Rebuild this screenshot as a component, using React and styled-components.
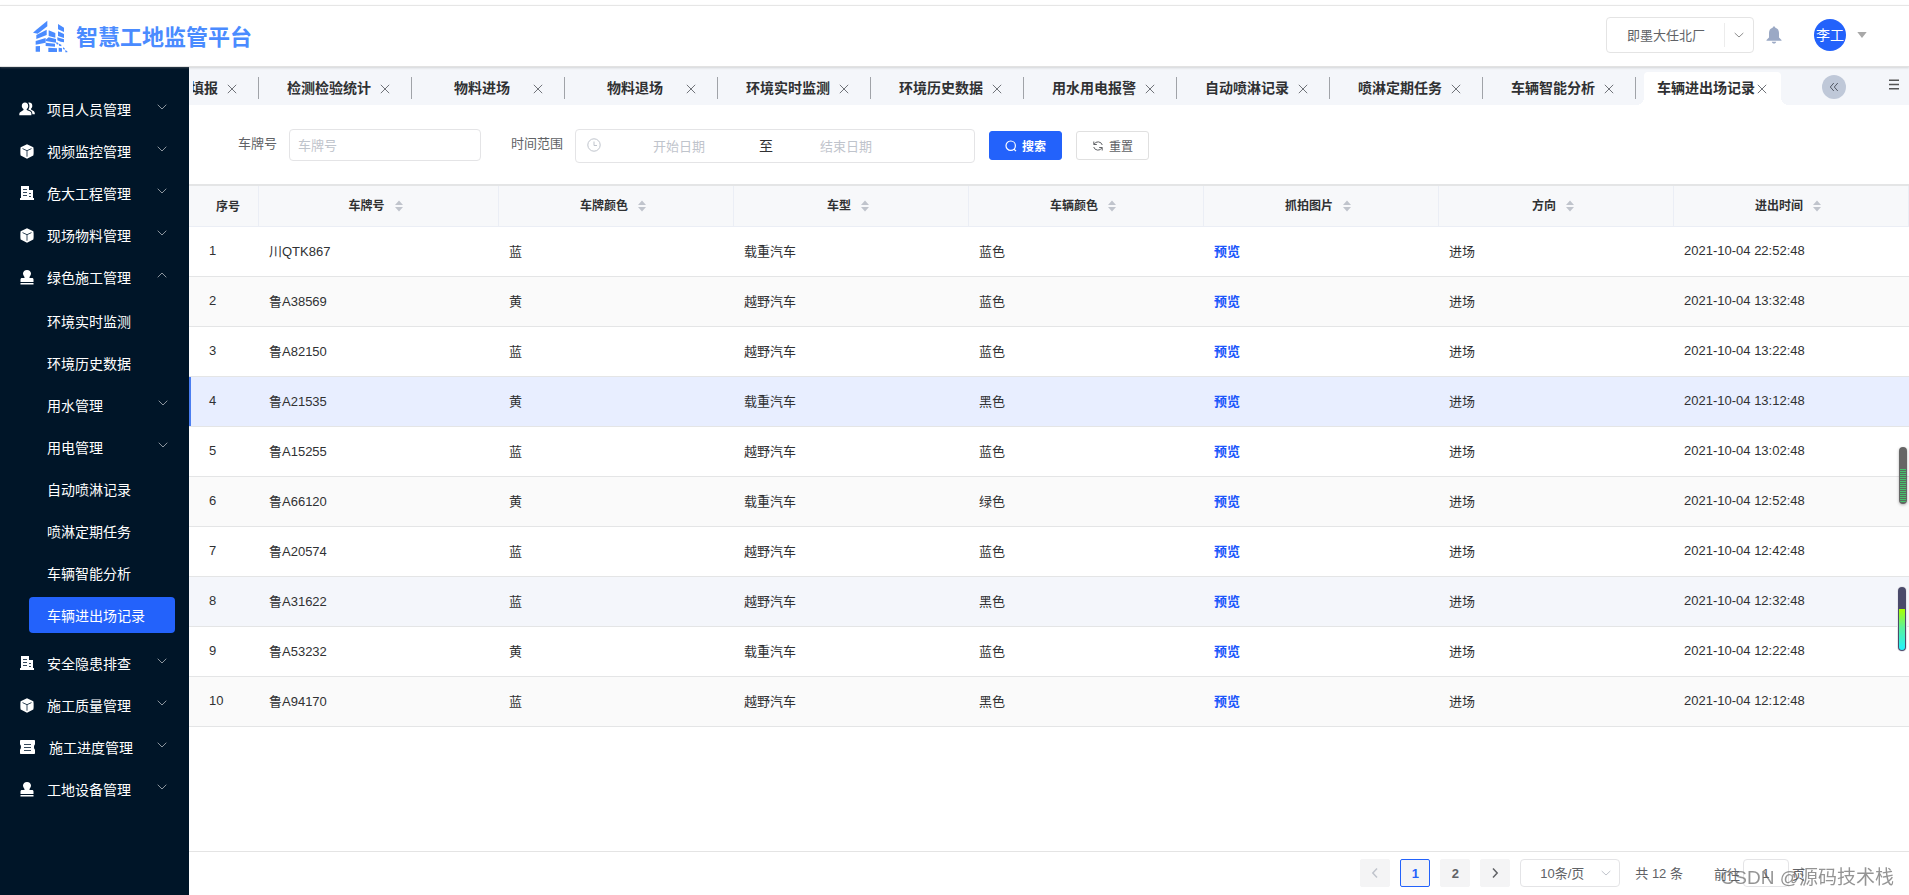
import React, { useState } from 'react'
import styled, { createGlobalStyle, css } from 'styled-components'

const GlobalStyle = createGlobalStyle`
* {
  box-sizing: border-box;
}

body {
  margin: 0;
  background: #fff;
  color: #303133;
  font-size: 13px;
  font-family: "Liberation Sans", "Noto Sans CJK SC", sans-serif;
}

button, input, select {
  font-family: inherit;
  outline: none;
}

button {
  padding: 0;
  border: none;
  background: none;
  cursor: pointer;
}

svg {
  display: block;
  flex: none;
}
`

const Page = styled.div`
display: flex;
flex-direction: column;
min-height: 100vh;
overflow: hidden;
padding-top: 5px;
`

/* ---------- header ---------- */

const Header = styled.header`
position: relative;
z-index: 2;
display: flex;
align-items: center;
justify-content: space-between;
height: 62px;
padding: 0 42px 0 33px;
border-top: 1px solid #e6e6e6;
border-bottom: 1px solid #e2e2e2;
box-shadow: 0 1px 2px rgba(150, 150, 150, 0.35);
`

const Brand = styled.a`
display: flex;
align-items: center;
gap: 8px;
color: #4a8bff;
text-decoration: none;
`

const BrandName = styled.h1`
margin: 0;
padding-top: 4px;
font-size: 22px;
line-height: 32px;
font-weight: 700;
`

const HeaderRight = styled.div`
display: flex;
align-items: center;
padding-bottom: 2px;
`

const SiteSelect = styled.label`
display: flex;
align-items: center;
width: 148px;
height: 36px;
margin-right: 12px;
border: 1px solid #e4e4e4;
border-radius: 4px;
color: #8c8c8c;
`

const SiteInput = styled.select`
appearance: none;
width: 118px;
height: 24px;
margin-right: 9px;
padding: 0 0 0 20px;
border: none;
border-right: 1px solid #ececec;
background: none;
color: #606266;
font-size: 13px;
`

const BellButton = styled.button`
margin-right: 32px;
color: #9ba9c5;
`

const UserButton = styled.button`
display: flex;
align-items: center;
gap: 11px;
color: #a8a8a8;
`

const Avatar = styled.span`
width: 32px;
border-radius: 50%;
background: #2362fb;
color: #fff;
font-size: 14px;
line-height: 32px;
text-align: center;
`

/* ---------- sidebar ---------- */

const Body = styled.div`
display: flex;
flex: 1;
`

const Sidebar = styled.nav`
flex: none;
width: 189px;
padding-top: 21px;
background: #001528;
`

const MenuItem = styled.button`
display: flex;
align-items: center;
width: 100%;
height: 42px;
padding: 0 22px 0 19px;
color: #fff;
font-size: 14px;
`

const MenuText = styled.span`
flex: 1;
padding-left: ${props => props.$wide ? '13px' : '12px'};
text-align: left;
`

const SubMenu = styled.div`
padding: 2px 0 6px;
`

const SubItem = styled(MenuItem)`
padding: 0 21px 0 35px;
`

const ActiveItem = styled.button`
display: flex;
align-items: center;
width: 146px;
height: 36px;
margin: 3px 0 3px 29px;
padding-left: 18px;
border-radius: 4px;
background: #2362fb;
color: #fff;
font-size: 14px;
`

const Arrow = styled.svg`
color: #8c959e;
margin-bottom: 4px;
transform: ${props => props.$open ? 'rotate(180deg)' : 'none'};
`

/* ---------- tabs ---------- */

const Main = styled.main`
display: flex;
flex: 1;
flex-direction: column;
min-width: 0;
`

const TabBar = styled.div`
display: flex;
align-items: center;
justify-content: space-between;
height: 38px;
padding: 0 10px 0 4px;
background: #f4f6fa;
`

const TabStrip = styled.div`
display: flex;
align-self: flex-end;
height: 33px;
`

const Tab = styled.div`
position: relative;
display: flex;
align-items: center;
width: ${props => props.$cut ? '66px' : '153px'};
padding-left: ${props => props.$cut ? '0' : '21px'};

&::after {
  content: '';
  position: absolute;
  right: 0;
  top: 5px;
  width: 1px;
  height: 22px;
  background: #a0a3a8;
}

${props => props.$active && css`
  width: 137px;
  margin: 0 8px;
  padding-left: 13px;
  border-radius: 4px 4px 0 0;
  background: #fff;

  &::before, &::after {
    content: '';
    position: absolute;
    top: auto;
    bottom: 0;
    width: 8px;
    height: 8px;
  }
  &::before {
    left: -8px;
    background: radial-gradient(circle at 0 0, transparent 8px, #fff 8px);
  }
  &::after {
    right: -8px;
    background: radial-gradient(circle at 100% 0, transparent 8px, #fff 8px);
  }
`}
`

const TabLink = styled.a`
display: flex;
justify-content: ${props => props.$cut ? 'flex-end' : 'center'};
width: ${props => props.$cut ? '25px' : '98px'};
margin-right: ${props => props.$cut ? '7px' : '0'};
padding-bottom: 3px;
overflow: hidden;
color: #303133;
font-size: 14px;
font-weight: 700;
text-decoration: none;
white-space: nowrap;
`

const CloseButton = styled.button`
display: flex;
justify-content: center;
width: 14px;
color: #707379;
`

const TabTools = styled.div`
display: flex;
align-items: center;
gap: 43px;
padding-top: 2px;
`

const CollapseButton = styled.button`
display: flex;
align-items: center;
justify-content: center;
width: 24px;
height: 24px;
border-radius: 50%;
background: #bfc8d8;
color: #555a66;
`

const ListButton = styled.button`
margin-bottom: 6px;
color: #555;
`

/* ---------- search form ---------- */

const SearchForm = styled.form`
display: flex;
align-items: center;
padding: 24px 49px 21px;
`

const FormLabel = styled.label`
align-self: flex-start;
margin-right: 12px;
color: #606266;
line-height: 30px;
`

const boxStyle = css`
border: 1px solid #e4e4e6;
border-radius: 4px;
background: #fff;
`

const PlateInput = styled.input`
${boxStyle}
width: 192px;
height: 32px;
margin: 0 30px 2px 0;
padding: 0 8px;
font-size: 13px;

&::placeholder {
  color: #bfc4cc;
}
`

const DateRange = styled.div`
${boxStyle}
display: flex;
align-items: center;
width: 400px;
height: 34px;
margin-right: 14px;
padding-left: 11px;
color: #bfc4cc;

svg {
  margin-bottom: 3px;
}
`

const DateInput = styled.input`
width: ${props => props.$end ? '136px' : '150px'};
margin-left: ${props => props.$end ? '0' : '3px'};
padding: 0;
border: none;
background: none;
font-size: 13px;
text-align: center;

&::placeholder {
  color: #bfc4cc;
}
`

const DateSeparator = styled.span`
padding: 0 5px 3px;
color: #303133;
font-size: 14px;
`

const FormButton = styled.button`
display: flex;
align-items: center;
justify-content: center;
gap: 5px;
width: 73px;
height: 29px;
margin: 0 14px 1px 0;
border: 1px solid ${props => props.$primary ? '#2362fb' : '#e0e0e0'};
border-radius: 3px;
background: ${props => props.$primary ? '#2362fb' : '#fff'};
color: ${props => props.$primary ? '#fff' : '#606266'};
font-size: 12px;
font-weight: ${props => props.$primary ? 700 : 400};
`

/* ---------- table ---------- */

const TableWrap = styled.div`
flex: 1;
border-top: 2px solid #e4e5e6;
`

const Table = styled.table`
width: 100%;
table-layout: fixed;
border-collapse: separate;
border-spacing: 0;
`

const HeadCell = styled.th`
width: ${props => props.$width || 'auto'};
height: 41px;
padding: ${props => props.$index ? '0 0 2px 9px' : '0 0 4px'};
border-right: 1px solid #ebeef5;
border-bottom: 1px solid #ebeef5;
background: #f7f8fa;
font-size: 12px;
font-weight: 700;
`

const SortButton = styled.button`
display: inline-flex;
align-items: center;
color: #303133;
font-size: 12px;
font-weight: 700;
vertical-align: middle;

svg {
  margin: 4px 5px 0 9px;
  color: #c0c4cc;
}
`

const Row = styled.tr`
background: ${props => {
  if (props.$selected) return '#e8eeff'
  if (props.$hover) return '#f4f6fb'
  return props.$striped ? '#fafafa' : '#fff'
}};

td:first-child {
  padding-left: 20px;
  box-shadow: ${props => props.$selected ? 'inset 2px 0 0 #4a7df0' : 'none'};
}
`

const Cell = styled.td`
height: 50px;
padding: 0 10px 2px;
border-bottom: 1px solid #e4e5e6;
color: #303133;
font-size: 13px;
`

const PreviewLink = styled.a`
color: #1a56fb;
font-weight: 700;
text-decoration: none;
`

/* ---------- pagination ---------- */

const Footer = styled.footer`
display: flex;
align-items: center;
justify-content: flex-end;
height: 44px;
padding: 0 104px 1px 0;
border-top: 1px solid #e4e4e4;
color: #606266;
`

const PageButton = styled.button`
display: flex;
align-items: center;
justify-content: center;
width: 30px;
height: 28px;
margin-right: 10px;
border: 1px solid ${props => props.$active ? '#2362fb' : '#f4f4f5'};
border-radius: 2px;
background: #f4f4f5;
color: ${props => props.$active ? '#2362fb' : '#606266'};
font-size: 13px;
font-weight: 700;

&:disabled {
  color: #c0c4cc;
}
`

const SizeSelect = styled.label`
${boxStyle}
display: flex;
align-items: center;
width: 100px;
height: 28px;
margin-right: 15px;
padding-right: 8px;
color: #c0c4cc;
`

const SizeInput = styled.select`
appearance: none;
flex: 1;
height: 26px;
padding: 0 0 0 19px;
border: none;
background: none;
color: #606266;
font-size: 13px;
`

const Total = styled.span`
margin-right: 31px;
padding-bottom: 2px;
`

const JumpLabel = styled.label`
display: flex;
align-items: center;
gap: 3px;
`

const JumpInput = styled.input`
${boxStyle}
width: 46px;
height: 28px;
padding: 0;
color: #606266;
font-size: 13px;
text-align: center;
`

/* ---------- floating things ---------- */

const Watermark = styled.div`
position: fixed;
right: 15px;
bottom: 4px;
color: rgba(90, 90, 90, 0.65);
font-size: 19px;
line-height: 26px;
pointer-events: none;
`

const Gauge = styled.div`
position: fixed;
z-index: 3;
right: 2px;
top: 447px;
display: flex;
align-items: flex-end;
width: 8px;
height: 57px;
padding: 1px;
border-radius: 4px;
background: #666;
box-shadow: 0 1px 3px rgba(0, 0, 0, 0.3);
overflow: hidden;

&::after {
  content: '';
  width: 100%;
  height: 34px;
  border-radius: 0 0 3px 3px;
  background: repeating-linear-gradient(#45c46c 0 1px, #5a6b5e 1px 2px);
}
`

const NeonGauge = styled(Gauge)`
right: 3px;
top: 587px;
height: 64px;
background: #4a4a6a;
box-shadow: 0 0 0 1px #e8e8ee;

&::after {
  height: 41px;
  background: linear-gradient(#aaff00, #5cf29a 45%, #22f2ff);
}
`

/* ---------- icons ---------- */

const Logo = () => (
  <svg width="35" height="33" viewBox="0 0 105 99" fill="currentColor">
    <path d="M43 2v17L14 41 0 38l10-9z" />
    <path d="M10 45l31-16v16L10 57z" />
    <path d="M8 63l30-9v14L8 74zM8 79l13-1v17H8z" />
    <path d="M47 31l20 8v14l-20-5zM47 52l22 5v11l-31-5v-4z" />
    <path d="M75 12l18 11v13l-18-8zM75 34l18 8v12l-18-6zM73 52l20 6v9l-10-2-10-4z" />
    <path d="M38 68l28 3v9l-28-2zM46 83l26 2v11H46z" />
    <path d="M70 66l6 3v5l-6-2zM78 71l7 3v5l-7-2zM77 83l10 2v10H77zM90 82l5 3v4l-5-2zM97 90l6 4v3h-6z" />
  </svg>
)

const ChevronDown = ({ size = 10 }) => (
  <svg width={size} height={size} viewBox="0 0 10 10" fill="none" stroke="currentColor">
    <path d="M0.7 3l4.3 4 4.3-4" />
  </svg>
)

const icons = {
  users: (
    <svg width="16" height="14" viewBox="0 0 16 14" fill="currentColor">
      <path d="M6 0.5c2 0 3.2 1.5 3.2 3.4 0 1.3-.6 2.5-1.5 3.1v1l3.5 1.6c.8.4 1.2 1.1 1.2 2v1.6H0.3v-1.3c0-.9.4-1.6 1.2-2L4.5 8V7c-1-.6-1.7-1.8-1.7-3.1C2.8 2 4 .5 6 .5z" />
      <path d="M9.3 0.7c2.2-.5 4 .9 4 3 0 1.3-.5 2.3-1.3 2.9v.9l2.6 1.6c.8.5 1.2 1.3 1.2 2.2v.9h-2.4c0-1.8-.6-2.9-2-3.6L9.3 7.5c1.6-2.2 1.5-5 0-6.8z" />
    </svg>
  ),
  cube: (
    <svg width="16" height="15" viewBox="0 0 16 15">
      <path d="M8 0.3l6.3 2.9c.4 1 .5 7 0 8.2L8 14.7l-6.3-3.3c-.5-1.2-.4-7.2 0-8.2z" fill="currentColor" />
      <path d="M3.5 4.6L8 6.7l4.5-2.1M8 6.7v6" fill="none" stroke="#33475a" />
    </svg>
  ),
  building: (
    <svg width="16" height="14" viewBox="0 0 16 14">
      <path d="M2 0h8v4h4v8h1v2H1v-2h1z" fill="currentColor" />
      <path d="M4 3.5h4M4 6.5h4M4 9.5h4M10 7.5h2M10 10.5h2" stroke="#33475a" />
    </svg>
  ),
  stamp: (
    <svg width="16" height="15" viewBox="0 0 16 15" fill="currentColor">
      <path d="M8 0c2.400 0 4 1.600 4 3.600 0 1.500-1 2.400-1.500 3.700V8H13c1 0 1.500.6 1.500 1.500V12h-13V9.500C1.500 8.600 2 8 3 8h2.500v-.7C5 6 4 5.100 4 3.600 4 1.600 5.600 0 8 0zM1.500 13h13v1.500h-13z" />
    </svg>
  ),
  ticket: (
    <svg width="17" height="14" viewBox="0 0 17 14">
      <path d="M2 0h13c.6 0 1 .4 1 1v3.500c-1.300.5-1.300 4.500 0 5V13c0 .6-.4 1-1 1H2c-.6 0-1-.4-1-1V9.500c1.300-.5 1.300-4.500 0-5V1c0-.6.4-1 1-1z" fill="currentColor" />
      <path d="M5 4.500h7M5 7.500h7M5 10.500h7" stroke="#33475a" />
    </svg>
  ),
}

const BellIcon = () => (
  <svg width="16" height="18" viewBox="0 0 16 18" fill="currentColor">
    <path d="M8 0.5c.8 0 1.300.5 1.300 1.200C11.800 2.300 13 4.300 13 7v4.500l2.500 2.500v.8H.5V14L3 11.500V7c0-2.700 1.200-4.700 3.700-5.300C6.700 1 7.200.5 8 .5zM5.800 15.800h4.400C10 17 9.200 17.600 8 17.600S6 17 5.800 15.800z" />
  </svg>
)

const CaretIcon = () => (
  <svg width="10" height="6" viewBox="0 0 10 6" fill="currentColor">
    <path d="M0.3 0h9.400L5 6z" />
  </svg>
)

const CloseIcon = () => (
  <svg width="10" height="10" viewBox="0 0 10 10" fill="none" stroke="currentColor">
    <path d="M0.8 0.8l8.4 8.4M9.2 0.8L0.8 9.2" />
  </svg>
)

const DoubleLeft = () => (
  <svg width="10" height="10" viewBox="0 0 10 10" fill="none" stroke="currentColor">
    <path d="M4.8 1L1.3 5l3.5 4M8.8 1L5.3 5l3.5 4" />
  </svg>
)

const ListIcon = () => (
  <svg width="10" height="11" viewBox="0 0 10 11" stroke="currentColor" strokeWidth="1.5">
    <path d="M0 1.2h10M0 5.5h10M0 9.8h10" />
  </svg>
)

const ClockIcon = () => (
  <svg width="14" height="14" viewBox="0 0 14 14" fill="none" stroke="currentColor">
    <circle cx="7" cy="7" r="6.2" />
    <path d="M7 3.5v4h3" />
  </svg>
)

const SearchIcon = () => (
  <svg width="12" height="12" viewBox="0 0 12 12" fill="none" stroke="currentColor" strokeWidth="1.2">
    <circle cx="5.7" cy="5.7" r="4.7" />
    <path d="M8.8 9l2.2 2.2" />
  </svg>
)

const RefreshIcon = () => (
  <svg width="12" height="12" viewBox="0 0 12 12" fill="none" stroke="currentColor">
    <path d="M1.8 1.5v3h3M2 4.300A4.500 4.500 0 0 1 10.300 5M10.200 10.500v-3h-3M10 7.700A4.500 4.500 0 0 1 1.700 7" />
  </svg>
)

const SortIcon = () => (
  <svg width="10" height="12" viewBox="0 0 10 12" fill="currentColor">
    <path d="M5 0.5L9 5H1zM5 11.5L1 7h8z" />
  </svg>
)

const PageArrow = ({ next }) => (
  <svg width="8" height="12" viewBox="0 0 8 12" fill="none" stroke="currentColor" strokeWidth="1.5">
    <path d={next ? 'M2 1.5L6.2 6 2 10.5' : 'M6 1.5L1.8 6 6 10.5'} />
  </svg>
)

/* ---------- data ---------- */

const menu = [
  { name: '项目人员管理', icon: 'users' },
  { name: '视频监控管理', icon: 'cube' },
  { name: '危大工程管理', icon: 'building' },
  { name: '现场物料管理', icon: 'cube' },
  {
    name: '绿色施工管理',
    icon: 'stamp',
    children: [
      { name: '环境实时监测' },
      { name: '环境历史数据' },
      { name: '用水管理', more: true },
      { name: '用电管理', more: true },
      { name: '自动喷淋记录' },
      { name: '喷淋定期任务' },
      { name: '车辆智能分析' },
      { name: '车辆进出场记录', active: true },
    ],
  },
  { name: '安全隐患排查', icon: 'building' },
  { name: '施工质量管理', icon: 'cube' },
  { name: '施工进度管理', icon: 'ticket' },
  { name: '工地设备管理', icon: 'stamp' },
]

const tabs = [
  '填报', '检测检验统计', '物料进场', '物料退场', '环境实时监测', '环境历史数据',
  '用水用电报警', '自动喷淋记录', '喷淋定期任务', '车辆智能分析', '车辆进出场记录',
]

const columns = ['车牌号', '车牌颜色', '车型', '车辆颜色', '抓拍图片', '方向', '进出时间']

const records = [
  ['川QTK867', '蓝', '载重汽车', '蓝色', '22:52:48'],
  ['鲁A38569', '黄', '越野汽车', '蓝色', '13:32:48'],
  ['鲁A82150', '蓝', '越野汽车', '蓝色', '13:22:48'],
  ['鲁A21535', '黄', '载重汽车', '黑色', '13:12:48'],
  ['鲁A15255', '蓝', '越野汽车', '蓝色', '13:02:48'],
  ['鲁A66120', '黄', '载重汽车', '绿色', '12:52:48'],
  ['鲁A20574', '蓝', '越野汽车', '蓝色', '12:42:48'],
  ['鲁A31622', '蓝', '越野汽车', '黑色', '12:32:48'],
  ['鲁A53232', '黄', '载重汽车', '蓝色', '12:22:48'],
  ['鲁A94170', '蓝', '越野汽车', '黑色', '12:12:48'],
]

const MenuArrow = ({ open }) => (
  <Arrow $open={open} width="10" height="6" viewBox="0 0 10 6" fill="none" stroke="currentColor">
    <path d="M0.7 0.7L5 5l4.3-4.3" />
  </Arrow>
)

const SideMenu = () => (
  <Sidebar>
    {menu.map(item => (
      <React.Fragment key={item.name}>
        <MenuItem type="button">
          {icons[item.icon]}
          <MenuText $wide={item.icon === 'ticket'}>{item.name}</MenuText>
          <MenuArrow open={!!item.children} />
        </MenuItem>
        {item.children && (
          <SubMenu>
            {item.children.map(child => child.active ? (
              <ActiveItem key={child.name} type="button">{child.name}</ActiveItem>
            ) : (
              <SubItem key={child.name} type="button">
                <MenuText>{child.name}</MenuText>
                {child.more && <MenuArrow />}
              </SubItem>
            ))}
          </SubMenu>
        )}
      </React.Fragment>
    ))}
  </Sidebar>
)

const App = () => {
  const [selected, setSelected] = useState(3)
  const [page, setPage] = useState('1')

  return (
    <>
      <GlobalStyle />
      <Page>
        <Header>
          <Brand href="#home">
            <Logo />
            <BrandName>智慧工地监管平台</BrandName>
          </Brand>
          <HeaderRight>
            <SiteSelect>
              <SiteInput aria-label="工地">
                <option>即墨大任北厂</option>
              </SiteInput>
              <ChevronDown />
            </SiteSelect>
            <BellButton type="button" aria-label="消息"><BellIcon /></BellButton>
            <UserButton type="button">
              <Avatar>李工</Avatar>
              <CaretIcon />
            </UserButton>
          </HeaderRight>
        </Header>

        <Body>
          <SideMenu />
          <Main>
            <TabBar>
              <TabStrip>
                {tabs.map((name, i) => (
                  <Tab key={name} $cut={i === 0} $active={i === tabs.length - 1}>
                    <TabLink href={`#tab${i}`} $cut={i === 0}>{name}</TabLink>
                    <CloseButton type="button" aria-label="关闭"><CloseIcon /></CloseButton>
                  </Tab>
                ))}
              </TabStrip>
              <TabTools>
                <CollapseButton type="button" aria-label="收起"><DoubleLeft /></CollapseButton>
                <ListButton type="button" aria-label="标签列表"><ListIcon /></ListButton>
              </TabTools>
            </TabBar>

            <SearchForm onSubmit={e => e.preventDefault()}>
              <FormLabel htmlFor="plate">车牌号</FormLabel>
              <PlateInput id="plate" placeholder="车牌号" />
              <FormLabel htmlFor="start">时间范围</FormLabel>
              <DateRange>
                <ClockIcon />
                <DateInput id="start" placeholder="开始日期" />
                <DateSeparator>至</DateSeparator>
                <DateInput $end aria-label="结束日期" placeholder="结束日期" />
              </DateRange>
              <FormButton $primary type="submit"><SearchIcon />搜索</FormButton>
              <FormButton type="reset"><RefreshIcon />重置</FormButton>
            </SearchForm>

            <TableWrap>
              <Table>
                <thead>
                  <tr>
                    <HeadCell $width="70px" $index>序号</HeadCell>
                    {columns.map((name, i) => (
                      <HeadCell key={name} $width={i === 0 ? '240px' : undefined}>
                        <SortButton type="button">{name}<SortIcon /></SortButton>
                      </HeadCell>
                    ))}
                  </tr>
                </thead>
                <tbody>
                  {records.map(([plate, plateColor, type, color, time], i) => (
                    <Row
                      key={plate}
                      $selected={i === selected}
                      $hover={i === 7}
                      $striped={i % 2 === 1}
                      onClick={() => setSelected(i)}
                    >
                      <Cell>{i + 1}</Cell>
                      <Cell>{plate}</Cell>
                      <Cell>{plateColor}</Cell>
                      <Cell>{type}</Cell>
                      <Cell>{color}</Cell>
                      <Cell><PreviewLink href="#preview">预览</PreviewLink></Cell>
                      <Cell>进场</Cell>
                      <Cell>2021-10-04 {time}</Cell>
                    </Row>
                  ))}
                </tbody>
              </Table>
            </TableWrap>

            <Footer>
              <PageButton type="button" aria-label="上一页" disabled><PageArrow /></PageButton>
              <PageButton type="button" $active>1</PageButton>
              <PageButton type="button">2</PageButton>
              <PageButton type="button" aria-label="下一页"><PageArrow next /></PageButton>
              <SizeSelect>
                <SizeInput aria-label="每页条数">
                  <option>10条/页</option>
                </SizeInput>
                <ChevronDown />
              </SizeSelect>
              <Total>共 12 条</Total>
              <JumpLabel>
                前往
                <JumpInput value={page} onChange={e => setPage(e.target.value)} />
                页
              </JumpLabel>
            </Footer>
          </Main>
        </Body>
      </Page>
      <Gauge />
      <NeonGauge />
      <Watermark>CSDN @源码技术栈</Watermark>
    </>
  )
}

export default App
